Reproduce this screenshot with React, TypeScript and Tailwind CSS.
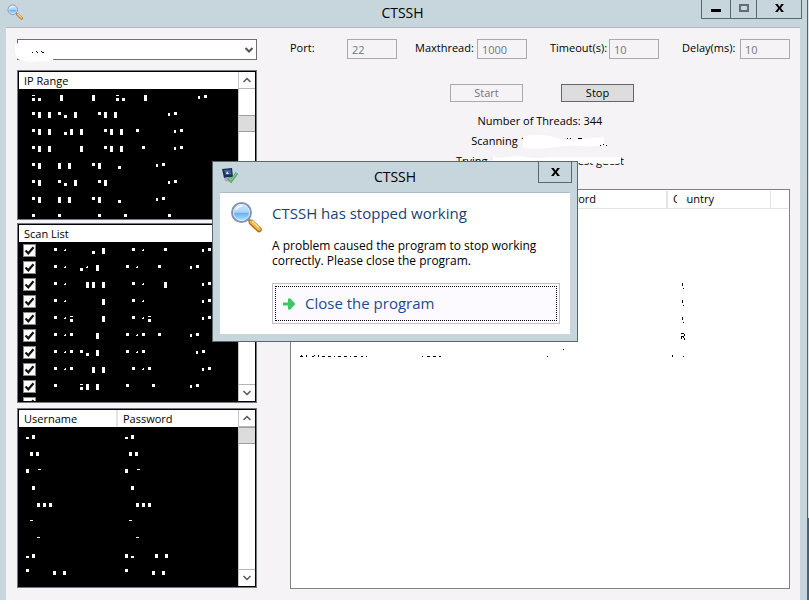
import { useState } from "react";

// Each mark is a letter for its shape and a number for its column.
const SHAPES: Record<string, string> = {
    b: "h3v6h-3z",
    s: "h3v3h-3z",
    l: "m0 3h3v3h-3z",
    c: "h3v1h-3zm0 3h3v3h-3z",
    t: "m0 1h2v3h-2z",
    a: "m1 1h1v2h-2v-1h1z",
    m: "m0 2h3v4h-3z",
    u: "m0 4h3v2h-3z",
    d: "m0 2h3v1h-3z",
};

const RANGES = [
    "c13 l19 b41 b73 c97 l103 b125 t179 s185",
    "s13 b19 b29 s39 l45 b55 s79 b85 b95 t149 s155",
    "s13 b19 b29 l45 b51 b61 s85 b91 b101 s117 t155 s161",
    "s13 b19 b29 b61 s85 b91 b101 s123 t155 s161",
    "s13 b19 b39 b49 s73 b79 l99 t137 s143",
    "s13 b19 s39 l45 b55 s79 b85 t149 s155",
    "s13 b19 b39 b49 s73 b79 l99 t137 s143",
    "s13 s39 s79 s105 s149",
];

const SCANS = [
    "s35 a45 l73 b83 s113 a123 s145 t183 s189",
    "s35 a45 l61 a67 b77 s107 a117 s139 t171 s177",
    "s35 a45 b67 b73 b83 s113 a123 b145 t183 s189",
    "s35 a45 b83 s113 a123 t183 s189",
    "s35 a45 c51 b83 s113 a123 c129 t183 s189",
    "s35 a45 s51 b77 s107 a117 s123 s139 t171 s177",
    "s35 a45 s51 s61 l67 b77 s107 a117 s123 t177 s183",
    "s35 a45 s51 b73 b83 s113 a123 s129 t183 s189",
    "s35 c61 b67 b77 s107 s133 t171 s177",
    "",
];

const LOGINS = [
    "u7 m13 u106 m112",
    "m11 m17 m110 m116",
    "m7 d19 m106 d118",
    "m13 m112",
    "m18 m24 m30 m117 m123 m129",
    "d11 d110",
    "d18 d117",
    "u7 m13 m106 u112 m136 m146",
    "s7 m34 m44 s106 m133 m143",
];

const FIVE = "M15 6h1v3h-1zM16 11h1v1h-1z";

// Leftover strokes of the result rows: ip, user, password, country
const RESULTS = [
    ["", "", "", ""],
    ["", "", "", ""],
    ["", "", "", ""],
    ["", "", "", ""],
    ["", "", "", FIVE],
    ["", "", "", FIVE],
    ["", "", "", FIVE],
    ["", "", "", "M14 5h3v1h-3zM17 6h1v2h-1zM14 8h3v1h-3zM15 9h-1v2h1zM16 9h1v1h-1zM17 10h1v2h-1z"],
    [
        "M8 11h3v1h-3zM9 10h1v1h-1zM14 10h1v2h-1zM20 11h2v1h-2zM22 10h1v1h-1zM26 10h1v2h-1zM30 11h3v1h-3zM36 11h3v1h-3zM42 11h1v1h-1zM46 11h3v1h-3zM52 11h3v1h-3zM58 11h1v1h-1zM62 11h3v1h-3zM69 11h2v1h-2zM74 11h1v1h-1z",
        "M7 11h1v1h-1zM12 11h3v1h-3zM18 11h3v1h-3zM24 11h2v1h-2z",
        "M6 11h1v1h-1zM22 4h1v1h-1z",
        "M5 10h1v2h-1zM16 11h1v1h-1z",
    ],
];

const Marks = ({ row }: { row: string }) => (
    <svg className="block h-[17px] w-full" fill="white" shapeRendering="crispEdges">
        {row.split(" ").filter(Boolean).map((mark) => (
            <path key={mark} d={`M${mark.slice(1)} 6${SHAPES[mark[0]]}`} />
        ))}
    </svg>
);

const Magnifier = ({ className, id }: { className: string; id: string }) => (
    <svg className={className} viewBox="0 0 32 32">
        <defs>
            <linearGradient id={id} x1="0" y1="0" x2="0" y2="1">
                <stop offset="0" stopColor="#d3ebfb" />
                <stop offset="0.48" stopColor="#a9d2f8" />
                <stop offset="0.55" stopColor="#6fb0f0" />
                <stop offset="1" stopColor="#b7f0ff" />
            </linearGradient>
        </defs>
        <path d="M18 18l5 5" stroke="#8c8f99" strokeWidth="3" />
        <path d="M21.500 21.500l7.500 7" stroke="#a86f25" strokeWidth="5.500" strokeLinecap="round" />
        <path d="M21.500 21l7.500 7" stroke="#f5b942" strokeWidth="3.500" strokeLinecap="round" />
        <path d="M22.500 20.500l6 5.500" stroke="#ffe9a0" strokeWidth="1.200" strokeLinecap="round" />
        <circle cx="11.500" cy="11.500" r="9.500" fill={`url(#${id})`} stroke="#8593b5" strokeWidth="2" />
        <circle cx="11.500" cy="11.500" r="8" fill="none" stroke="#dcecff" strokeWidth="1" />
        <path d="M6 9q2-4 6-4" fill="none" stroke="white" strokeWidth="1.500" />
    </svg>
);

const ScrollBar = ({ thumb }: { thumb: string }) => (
    <div className="flex w-[17px] shrink-0 flex-col border-l border-[#c5c5c5] bg-white">
        <button aria-label="Scroll up" className="flex h-[17px] items-center justify-center border-b border-[#b5b5b5]">
            <svg className="h-2 w-2" viewBox="0 0 8 8" fill="none" stroke="#555" strokeWidth="1.500">
                <path d="M0.500 6L4 2.500L7.500 6" />
            </svg>
        </button>
        <div className="flex-1">
            <div className={"h-[17px] border-y border-[#a0a0a0] bg-[#dcdcdc] " + thumb} />
        </div>
        <button aria-label="Scroll down" className="flex h-[17px] items-center justify-center border-t border-[#b5b5b5]">
            <svg className="h-2 w-2" viewBox="0 0 8 8" fill="none" stroke="#555" strokeWidth="1.500">
                <path d="M0.500 2L4 5.500L7.500 2" />
            </svg>
        </button>
    </div>
);

type ListProps = {
    heads: string[];
    rows: string[];
    thumb: string;
    className: string;
    checks?: boolean;
};

const ListBox = ({ heads, rows, thumb, className, checks }: ListProps) => (
    <div className={"border border-[#77777f] " + className}>
        <div className="flex h-full border border-black bg-black">
            <div className="min-w-0 flex-1 overflow-hidden">
                <div className="flex h-[17px] bg-white">
                    {heads.map((head, i) => (
                        <div
                            key={head}
                            className={
                                i < heads.length - 1
                                    ? "w-[99px] border-r-2 border-[#e3e3e3] pl-[5px] leading-[18px]"
                                    : "flex-1 pl-[5px] leading-[18px]"
                            }
                        >
                            {head}
                        </div>
                    ))}
                </div>
                {rows.map((row, i) =>
                    checks ? (
                        <div key={i} className="grid h-[17px]">
                            <div className="col-start-1 row-start-1">
                                <Marks row={row} />
                            </div>
                            <label className="col-start-1 row-start-1 ml-1 grid h-[13px] w-[13px] self-center">
                                <input
                                    type="checkbox"
                                    defaultChecked
                                    aria-label={`Scan item ${i + 1}`}
                                    className="peer col-start-1 row-start-1 h-[13px] w-[13px] appearance-none border border-[#888] bg-white"
                                />
                                <svg
                                    className="pointer-events-none invisible col-start-1 row-start-1 h-[13px] w-[13px] peer-checked:visible"
                                    viewBox="0 0 13 13"
                                    fill="none"
                                    stroke="#111"
                                    strokeWidth="2.200"
                                >
                                    <path d="M2.500 6.500L5.300 9.300L10.500 3.200" />
                                </svg>
                            </label>
                        </div>
                    ) : (
                        <Marks key={i} row={row} />
                    )
                )}
            </div>
            <ScrollBar thumb={thumb} />
        </div>
    </div>
);

const Field = ({ id, label, value, width }: { id: string; label: string; value: string; width: string }) => (
    <div className="flex items-center">
        <label htmlFor={id} className={"pb-px whitespace-nowrap " + width}>{label}</label>
        <input
            id={id}
            defaultValue={value}
            disabled
            className="h-5 w-[50px] border border-[#aaa9ad] bg-[#f6f3f6] pl-1 text-[#77757a]"
        />
    </div>
);

const Dialog = ({ onClose }: { onClose: () => void }) => (
    <div
        role="dialog"
        aria-labelledby="dialog-title"
        className="absolute left-[212px] top-[161px] flex h-[181px] w-[366px] flex-col border border-[#5b686d] bg-[#c6d6dc] px-[7px] pb-[7px]"
    >
        <div className="flex h-[30px] items-start">
            <svg className="mt-[6px] ml-[2px] h-4 w-4" viewBox="0 0 16 16">
                <path d="M0 1l10-1 1 9-9 1z" fill="#1d2c59" />
                <path d="M2 2l7-.5.5 5-6 .5z" fill="#3b5fa3" />
                <path d="M5 3l2 3H4z" fill="#ffe36b" />
                <path d="M2 10l4-1 2 5-5-1z" fill="#a9aeb8" />
                <path d="M6 10l3 3 6-8" fill="none" stroke="#5fa56b" strokeWidth="3" />
                <path d="M6 9.500l3 3 6-8" fill="none" stroke="#93d69a" strokeWidth="1" />
            </svg>
            <h2 id="dialog-title" className="ml-[14px] flex-1 pt-[5px] text-center text-[14px] leading-[20px] text-black">CTSSH</h2>
            <button
                aria-label="Close dialog"
                onClick={onClose}
                className="-mr-[2px] flex h-[21px] w-[34px] items-center justify-center border border-t-0 border-[#5b686d]"
            >
                <CrossIcon />
            </button>
        </div>
        <div className="flex flex-1 border-t border-[#aabec9] bg-white pl-[10px] pt-2 pr-[10px]">
            <Magnifier id="lens-large" className="h-8 w-8 shrink-0" />
            <div className="ml-[10px] min-w-0 flex-1">
                <p className="whitespace-nowrap text-[15px] leading-[24px] text-[#1b3f73]">CTSSH has stopped working</p>
                <p className="mt-[13px] text-[12px] leading-[15px] text-black">
                    A problem caused the program to stop working<br />correctly. Please close the program.
                </p>
                <button
                    onClick={onClose}
                    className="mt-[15px] flex h-[41px] w-full border border-[#c0bfc3] bg-[#fdfaff] p-[2px] text-[#1f4a93]"
                >
                    <span className="flex h-full flex-1 items-center border border-dotted border-black pl-[7px] text-[15px]">
                        <svg className="h-3 w-3" viewBox="0 0 12 12">
                            <path d="M0 4.500h5V0.500h2.500L12.500 6L7.500 11.500H5V7.500H0z" fill="#3fc764" />
                        </svg>
                        <span className="ml-[10px]">Close the program</span>
                    </span>
                </button>
            </div>
        </div>
    </div>
);

const CrossIcon = () => (
    <svg className="h-2 w-[9px]" viewBox="0 0 10 9">
        <path d="M0 0h3l2 3 2-3h3L6.500 4.500L10 9H7L5 6L3 9H0l3.500-4.500z" fill="black" />
    </svg>
);

const App = () => {
    const [open, setOpen] = useState(true);
    const [running, setRunning] = useState(true);

    return (
        <div className="relative flex h-screen bg-white pb-1 font-['Open_Sans',sans-serif] text-[11px] text-black">
            <main className="flex min-w-0 flex-1 flex-col border-r border-[#536369] bg-[#c6d6dc] pr-[7px] pl-[6px]">
                <header className="flex h-7 items-start border-b border-[#b0bcc5]">
                    <Magnifier id="lens-small" className="mt-1 ml-px h-4 w-4 shrink-0" />
                    <span className="w-[81px] shrink-0" />
                    <h1 className="flex-1 pt-[3px] text-center text-[14px] leading-[20px]">CTSSH</h1>
                    <div className="-mr-[2px] flex h-[19px] border border-t-0 border-[#5b686d]">
                        <button aria-label="Minimize" className="flex w-[28px] items-center justify-center pt-[2px]">
                            <svg className="h-[3px] w-[10px]"><rect width="10" height="3" /></svg>
                        </button>
                        <button aria-label="Maximize" className="flex w-[26px] items-center justify-center border-l border-[#5b686d] pb-[2px]">
                            <svg className="h-2 w-[10px]"><rect x="1" y="1" width="8" height="6" fill="none" stroke="#626c70" strokeWidth="2" /></svg>
                        </button>
                        <button aria-label="Close" className="flex w-[45px] items-center justify-center border-l border-[#5b686d] pb-[2px]">
                            <CrossIcon />
                        </button>
                    </div>
                </header>
                <div className="flex min-h-0 flex-1 bg-[#f6f3f6] pt-[11px] pr-[10px] pb-[11px] pl-[11px]">
                    <section className="flex w-[240px] shrink-0 flex-col">
                        <div className="relative h-[21px]">
                            <select aria-label="Profile" className="h-[21px] w-full appearance-none border border-[#6d6d72] bg-white">
                                <option aria-label="Default" />
                            </select>
                            <svg className="pointer-events-none absolute top-[8px] right-1 h-[7px] w-2" viewBox="0 0 8 7" fill="none" stroke="#555" strokeWidth="2">
                                <path d="M0.500 1L4 4.500L7.500 1" />
                            </svg>
                            <svg className="pointer-events-none absolute top-[4px] -left-[2px] h-5 w-10" viewBox="0 0 40 20">
                                <path d="M1 1q3-2 5 0h32q2 8 0 16-6 3-12 1-8 2-16 0-7-1-8-3-4-7-1-14z" fill="white" />
                                <path d="M17 9h1v1h-1zM21 8h1v1h-1zM22 9h1v1h-1zM26 8h1v1h-1zM27 9h2v1h-2z" shapeRendering="crispEdges" />
                            </svg>
                        </div>
                        <ListBox className="mt-[10px] h-[150px]" heads={["IP Range"]} rows={RANGES} thumb="mt-[26px]" />
                        <ListBox className="mt-[3px] h-[180px]" heads={["Scan List"]} rows={SCANS} thumb="mt-5" checks />
                        <ListBox className="mt-[5px] h-[180px]" heads={["Username", "Password"]} rows={LOGINS} thumb="" />
                    </section>
                    <section className="ml-[33px] flex min-w-0 flex-1 flex-col">
                        <div className="flex justify-between">
                            <Field id="port" label="Port:" value="22" width="w-[57px]" />
                            <Field id="maxthread" label="Maxthread:" value="1000" width="ml-[18px] w-[62px]" />
                            <Field id="timeout" label="Timeout(s):" value="10" width="ml-[23px] w-[59px]" />
                            <Field id="delay" label="Delay(ms):" value="10" width="ml-[23px] w-[58px]" />
                        </div>
                        <div className="mt-[25px] flex justify-center gap-[38px] pl-1">
                            <button
                                disabled={running}
                                onClick={() => setRunning(true)}
                                className="h-[18px] w-[73px] border border-[#5c5a60] leading-[16px] disabled:border-[#aaa9ad] disabled:text-[#77757a]"
                            >
                                Start
                            </button>
                            <button
                                onClick={() => setRunning(false)}
                                className="h-[18px] w-[73px] border border-[#67656b] bg-[#dddddd] leading-[16px]"
                            >
                                Stop
                            </button>
                        </div>
                        <div className="mt-[9px] h-[78px] leading-[20px]">
                            <p className="text-center">Number of Threads: 344</p>
                            <div className="flex justify-center">
                                <span>Scanning 1</span>
                                <svg className="-ml-1 h-5 w-[86px]" viewBox="0 0 86 20">
                                    <path d="M0 6Q8 3 17 4q9 0 16 3 10 3 20 2 14-2 28-3v8q-12 2-24 1-14-1-24 1-16 3-33 1z" fill="white" />
                                    <path d="M44 7h1v1h-1zM47 7h1v1h-1zM55 7h4v1h-4zM77 14h1v1h-1zM80 13h1v1h-1zM83 14h1v1h-1z" shapeRendering="crispEdges" />
                                </svg>
                            </div>
                            <div className="relative mx-auto flex w-[168px] justify-between">
                                <span>Trying 1</span>
                                <span>test guest</span>
                                <svg className="absolute top-0 left-[36px] h-5 w-[130px]" viewBox="0 0 130 20">
                                    <path d="M0 5q7 3 16 1t18 0 24 0h71v6q-12 2-22 0H0z" fill="white" />
                                </svg>
                            </div>
                        </div>
                        <div className="min-h-0 flex-1 overflow-hidden border border-[#818188] bg-white px-px pt-px">
                            <table className="w-full table-fixed border-collapse text-left">
                                <thead>
                                    <tr className="h-[17px] border-b border-[#e3e3e3]">
                                        <th className="w-[123px] border-r border-[#e3e3e3] p-0 pl-[5px] font-normal leading-[16px]">IP</th>
                                        <th className="w-[126px] border-r border-[#e3e3e3] p-0 pl-[5px] font-normal leading-[16px]">Username</th>
                                        <th className="w-[126px] border-r-2 border-[#e3e3e3] p-0 pl-[5px] font-normal leading-[16px]">Password</th>
                                        <th className="w-[103px] border-r border-[#e3e3e3] p-0 pl-[5px] font-normal leading-[16px]">
                                            <span className="relative">
                                                Country
                                                <svg className="absolute top-0 left-1 h-4 w-[9px]"><rect width="9" height="16" fill="white" /></svg>
                                            </span>
                                        </th>
                                        <th aria-label="Status" className="p-0" />
                                    </tr>
                                </thead>
                                <tbody>
                                    {RESULTS.map((row, i) => (
                                        <tr key={i}>
                                            {row.map((d, j) => (
                                                <td key={j} className="p-0">
                                                    <svg className="block h-[17px] w-full" shapeRendering="crispEdges"><path d={d} /></svg>
                                                </td>
                                            ))}
                                        </tr>
                                    ))}
                                </tbody>
                            </table>
                        </div>
                    </section>
                </div>
            </main>
            <div className="flex w-px flex-col">
                <div className="h-[518px] bg-[#dce6ea]" />
                <div className="flex-1 bg-[#48627a]" />
            </div>
            {open && <Dialog onClose={() => setOpen(false)} />}
        </div>
    );
};

export default App;
